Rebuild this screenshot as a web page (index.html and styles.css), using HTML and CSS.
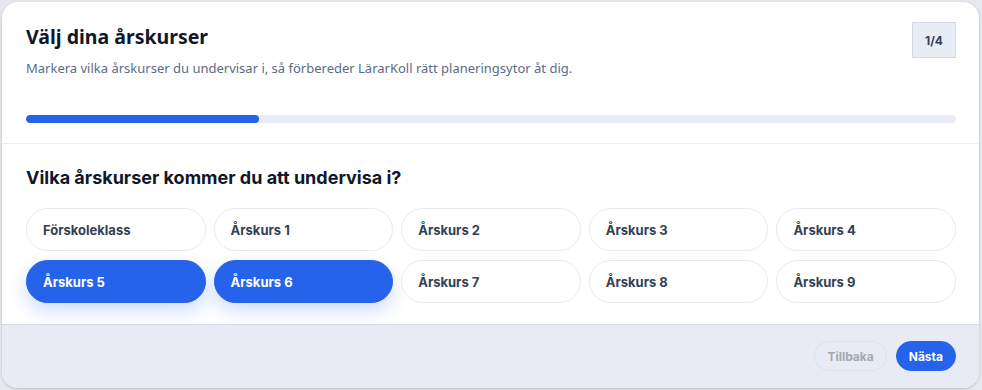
FILE: index.html
```html
<!DOCTYPE html>
<html lang="sv">
<head>
  <meta charset="UTF-8">
  <meta name="viewport" content="width=device-width, initial-scale=1.0">
  <title>Välj dina årskurser</title>
  <link rel="stylesheet" href="styles.css">
</head>
<body>

<div class="modal">
  <div class="modal-head">
    <div class="head-row">
      <div>
        <h1 class="title">Välj dina årskurser</h1>
        <p class="subtitle">Markera vilka årskurser du undervisar i, så förbereder LärarKoll rätt planeringsytor åt dig.</p>
      </div>
      <div class="step-badge">1/4</div>
    </div>
    <div class="progress">
      <div class="progress-fill" style="width: 25%"></div>
    </div>
  </div>

  <div class="modal-body">
    <h2 class="question">Vilka årskurser kommer du att undervisa i?</h2>
    <div class="grade-grid">
      <button class="grade">Förskoleklass</button>
      <button class="grade">Årskurs 1</button>
      <button class="grade">Årskurs 2</button>
      <button class="grade">Årskurs 3</button>
      <button class="grade">Årskurs 4</button>
      <button class="grade selected">Årskurs 5</button>
      <button class="grade selected">Årskurs 6</button>
      <button class="grade">Årskurs 7</button>
      <button class="grade">Årskurs 8</button>
      <button class="grade">Årskurs 9</button>
    </div>
  </div>

  <div class="modal-foot">
    <button class="btn btn-back" disabled>Tillbaka</button>
    <button class="btn btn-next">Nästa</button>
  </div>
</div>

</body>
</html>
```

FILE: styles.css
```css
* {
  box-sizing: border-box;
}

html, body {
  margin: 0;
  height: 100%;
  overflow: hidden;
}

body {
  background: #e6e8ed;
  padding: 2px 3px 2px 2px;
  font-family: Inter, "Noto Sans", sans-serif;
  color: #0f172a;
}

.modal {
  height: 100%;
  background: #fff;
  border-radius: 16px;
  box-shadow: 0 1px 3px rgba(0, 0, 0, 0.18);
  display: flex;
  flex-direction: column;
  overflow: hidden;
}

.modal-head {
  padding: 20px 23px 20px 24px;
  border-bottom: 1px solid #eceef2;
}

.head-row {
  display: flex;
  justify-content: space-between;
  align-items: flex-start;
}

.title {
  margin: 3px 0 0;
  font-family: "Noto Sans", Inter, sans-serif;
  font-size: 19.5px;
  line-height: 24px;
  font-weight: 700;
  color: #0f172a;
}

.subtitle {
  margin: 10px 0 0;
  font-family: "Noto Sans", Inter, sans-serif;
  font-size: 13px;
  line-height: 18px;
  color: #5b6b85;
}

.step-badge {
  width: 44px;
  height: 36px;
  display: flex;
  align-items: center;
  justify-content: center;
  background: #e8ecf5;
  border: 1px solid #d3d9e4;
  font-size: 12px;
  font-weight: 700;
  color: #334155;
}

.progress {
  margin-top: 38px;
  height: 8px;
  border-radius: 4px;
  background: #e8ecf5;
  overflow: hidden;
}

.progress-fill {
  height: 100%;
  background: #2563eb;
  border-radius: 4px;
}

.modal-body {
  flex: 1;
  padding: 22px 23px 0 24px;
}

.question {
  margin: 0 0 18px;
  font-size: 18px;
  line-height: 24px;
  font-weight: 700;
  color: #0f172a;
}

.grade-grid {
  display: grid;
  grid-template-columns: repeat(5, 1fr);
  gap: 9px 8px;
}

.grade {
  height: 43px;
  border: 1px solid #e8eaee;
  border-radius: 22px;
  background: #fff;
  text-align: left;
  padding: 0 16px;
  font-family: inherit;
  font-size: 13px;
  font-weight: 700;
  color: #334155;
  cursor: pointer;
}

.grade.selected {
  background: #2563eb;
  border-color: #2563eb;
  color: #fff;
  box-shadow: 0 8px 18px rgba(37, 99, 235, 0.22);
}

.modal-foot {
  background: #e8ebf3;
  border-top: 1px solid #d6dae2;
  padding: 16px 23px 17px;
  display: flex;
  justify-content: flex-end;
  gap: 9px;
}

.btn {
  height: 30px;
  padding: 0 12px;
  border-radius: 15px;
  font-family: inherit;
  font-size: 12px;
  font-weight: 700;
  cursor: pointer;
}

.btn-back {
  background: transparent;
  border: 1px solid #dde1e9;
  color: #a3a9b4;
  cursor: default;
}

.btn-next {
  background: #2563eb;
  border: 1px solid #2563eb;
  color: #fff;
}
```
